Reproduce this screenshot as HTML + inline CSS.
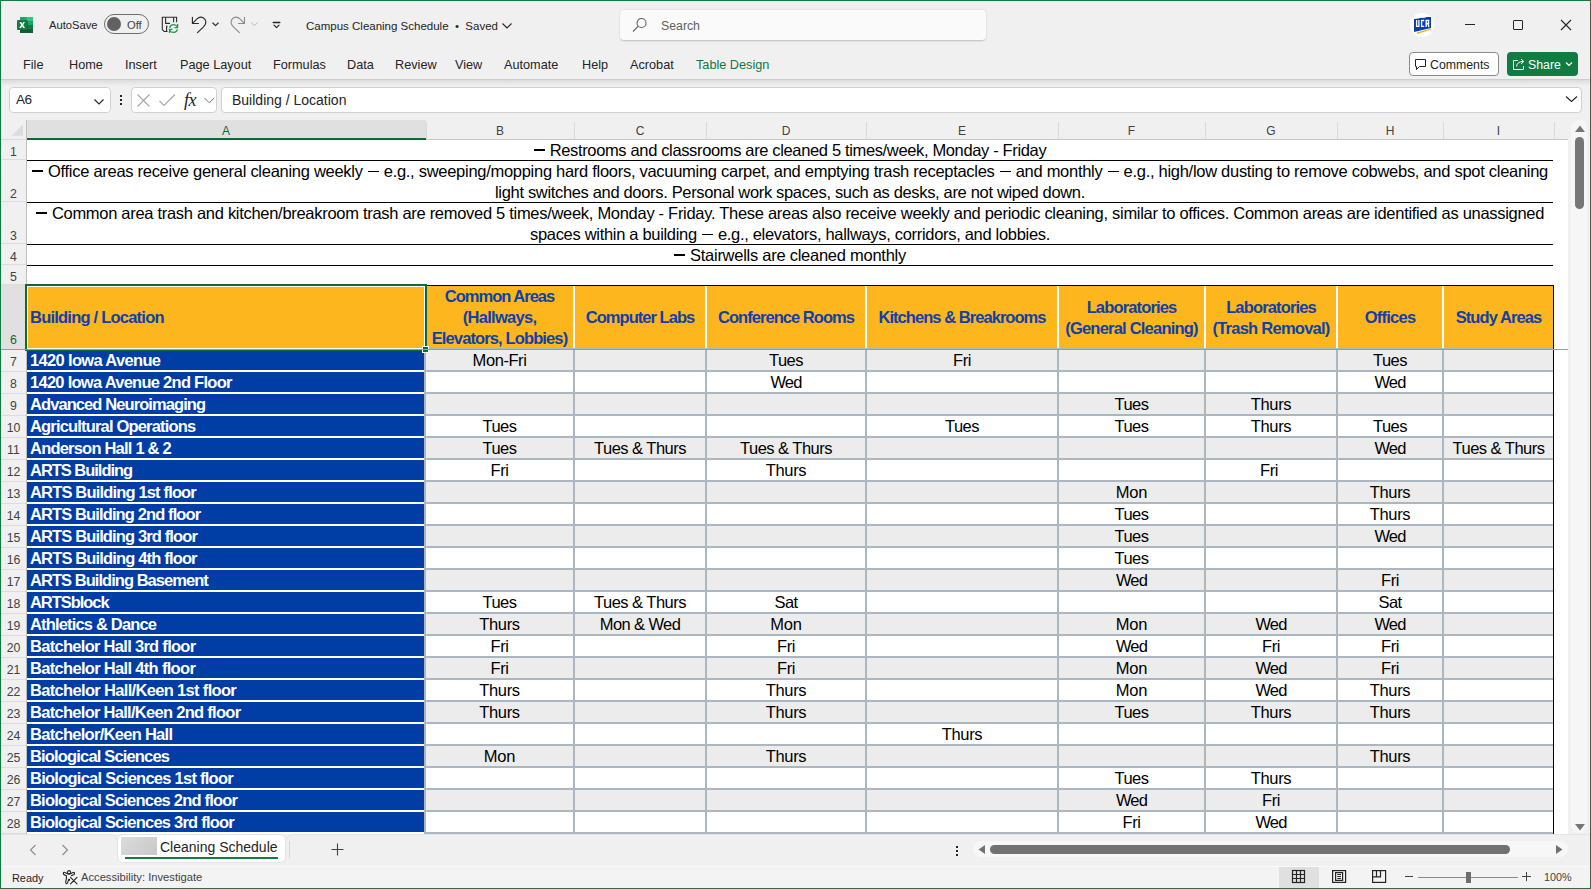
<!DOCTYPE html>
<html><head><meta charset="utf-8">
<style>
*{box-sizing:border-box;margin:0;padding:0}
html,body{width:1591px;height:889px;overflow:hidden;background:#f0f0f0;font-family:"Liberation Sans",sans-serif;color:#242424}
.a{position:absolute}
.t{position:absolute;white-space:nowrap;line-height:1}
#win{position:absolute;left:0;top:0;width:1591px;height:889px;border:1px solid #107c41;pointer-events:none;z-index:50}
.tab{font-size:12.7px;color:#242424;top:59px}
.cell{position:absolute;font-size:15.5px;white-space:nowrap;line-height:1}
</style></head><body>
<div id="win"></div>

<!-- ===== Title bar ===== -->
<svg class="a" style="left:13px;top:13px" width="24" height="24" viewBox="0 0 24 24">
  <rect x="7" y="4" width="13" height="16" rx="0.8" fill="#21a366"/>
  <rect x="13.5" y="4" width="6.5" height="4" fill="#33c481"/>
  <rect x="7" y="12" width="13" height="4" fill="#107c41"/>
  <rect x="7" y="16" width="13" height="4" fill="#185c37"/>
  <rect x="7.5" y="8" width="7.5" height="10" fill="#0a4a26" opacity="0.55"/>
  <rect x="4" y="7" width="10.5" height="10" rx="0.8" fill="#107c41"/>
  <path d="M6.3 9 H8.2 L9.2 10.9 L10.2 9 H12 L10.2 12 L12 15 H10.1 L9.1 13.1 L8.1 15 H6.2 L8.1 12 Z" fill="#fff"/>
</svg>
<div class="t" style="left:49px;top:20px;font-size:11.2px;color:#242424">AutoSave</div>
<div class="a" style="left:104px;top:14px;width:45px;height:20px;border:1px solid #6e6e6e;border-radius:10px;background:transparent"></div>
<div class="a" style="left:107px;top:17px;width:14px;height:14px;border-radius:50%;background:#616161"></div>
<div class="t" style="left:127px;top:20px;font-size:11.2px;color:#424242">Off</div>

<!-- save icon -->
<svg class="a" style="left:158px;top:13px" width="24" height="24" viewBox="0 0 24 24" fill="none" stroke="#2b2b2b" stroke-width="1.1">
  <path d="M9.5 18.5 H6.2 L4.3 16.6 V4.3 H18.6 V9.3"/>
  <path d="M7.6 4.3 V10.4 H12"/><path d="M15.6 4.3 V9.3"/>
  <path d="M9.6 13.3 H8.6 V18.5"/>
  <g stroke="#1f9a48" stroke-width="1.3"><path d="M11.6 14.8 C12.5 11 17.5 10.5 19.4 13.8"/><path d="M19.6 11 V14.7 H16.5"/>
  <path d="M19.4 16.3 C18.5 20 13.5 20.5 11.6 17.2"/><path d="M11.5 19.9 V16.3 H14.5"/></g>
</svg>
<!-- undo -->
<svg class="a" style="left:186px;top:13px" width="36" height="24" viewBox="0 0 36 24" fill="none" stroke="#2b2b2b" stroke-width="1.15" stroke-linecap="round" stroke-linejoin="round">
  <path d="M6.4 4.3 V10.5 H12.5"/>
  <path d="M7 9.8 L11 5.8 C13.5 3.3 17.5 3.6 19.2 6.8 C20.3 9 19.6 11.8 17.5 13.8 L11.5 19.6"/>
  <path d="M26.8 10 L29.5 12.7 L32.2 10"/>
</svg>
<!-- redo -->
<svg class="a" style="left:226px;top:13px" width="60" height="24" viewBox="0 0 60 24" fill="none" stroke-linecap="round" stroke-linejoin="round">
  <g stroke="#8a8a8a" stroke-width="1.1">
  <path d="M18.5 4.3 V10.5 H12.4"/>
  <path d="M17.9 9.8 L13.9 5.8 C11.4 3.3 7.4 3.6 5.7 6.8 C4.6 9 5.3 11.8 7.4 13.8 L13.4 19.6"/></g>
  <path d="M25.8 10 L28.5 12.6 L31.2 10" stroke="#b4b4b4" stroke-width="1"/>
  <path d="M47.3 9.5 H53.8" stroke="#242424" stroke-width="1.4"/>
  <path d="M48 12.2 L50.5 14.7 L53 12.2" stroke="#242424" stroke-width="1.2"/>
</svg>
<div class="t" style="left:306px;top:21px;font-size:11.5px;color:#242424">Campus Cleaning Schedule &nbsp;•&nbsp; Saved</div>
<svg class="a" style="left:501px;top:22px" width="12" height="8" viewBox="0 0 12 8" fill="none" stroke="#242424" stroke-width="1.1"><path d="M1.5 1.5 L6 6 L10.5 1.5"/></svg>

<!-- search -->
<div class="a" style="left:619px;top:9px;width:368px;height:32px;background:#fafafa;border:1px solid #e3e3e3;border-bottom-color:#c9c9c9;border-radius:5px;box-shadow:0 1px 1px rgba(0,0,0,0.06)"></div>
<svg class="a" style="left:631px;top:16px" width="18" height="18" viewBox="0 0 18 18" fill="none" stroke="#616161" stroke-width="1.1"><circle cx="10.5" cy="7" r="4.5"/><path d="M7.3 10.2 L2 15.5"/></svg>
<div class="t" style="left:661px;top:20px;font-size:12.3px;color:#616161">Search</div>

<!-- UCR avatar -->
<div class="a" style="left:1410px;top:13px;width:24px;height:24px;border-radius:50%;background:#fff"></div>
<svg class="a" style="left:1406px;top:9px" width="32" height="32" viewBox="0 0 32 32">
  <path d="M8 10 L13 9.6 L13.5 9 L19.5 8.8 L20 8 L25 8 L25 19 L8 23 Z" fill="#0b3ea8"/>
  <path d="M11 23.6 L25 19.4 L25 20.6 L11.2 25 Z" fill="#f5a800"/>
  <g fill="none" stroke="#fff" stroke-width="1.3">
    <path d="M10.6 11 V17.4 H12.9 V11"/>
    <path d="M18.2 11.5 H15.6 V17.4 H18.2"/>
    <path d="M20.2 18 V11.5 H22.6 V14.5 H20.6 M21.8 14.5 L23 18"/>
  </g>
</svg>
<!-- window controls -->
<div class="a" style="left:1465px;top:24px;width:10px;height:1px;background:#242424"></div>
<div class="a" style="left:1513px;top:20px;width:10px;height:10px;border:1px solid #242424;border-radius:1px"></div>
<svg class="a" style="left:1560px;top:19px" width="12" height="12" viewBox="0 0 12 12" stroke="#242424" stroke-width="1.1"><path d="M1 1 L11 11 M11 1 L1 11"/></svg>

<!-- ===== Ribbon tabs ===== -->
<div class="t tab" style="left:23px">File</div>
<div class="t tab" style="left:69px">Home</div>
<div class="t tab" style="left:125px">Insert</div>
<div class="t tab" style="left:180px">Page Layout</div>
<div class="t tab" style="left:273px">Formulas</div>
<div class="t tab" style="left:347px">Data</div>
<div class="t tab" style="left:395px">Review</div>
<div class="t tab" style="left:455px">View</div>
<div class="t tab" style="left:504px">Automate</div>
<div class="t tab" style="left:582px">Help</div>
<div class="t tab" style="left:630px">Acrobat</div>
<div class="t tab" style="left:696px;color:#0e7a3d">Table Design</div>

<!-- Comments / Share -->
<div class="a" style="left:1409px;top:52px;width:90px;height:24px;border:1px solid #8a8a8a;border-radius:4px;background:#fff"></div>
<svg class="a" style="left:1414px;top:58px" width="13" height="13" viewBox="0 0 13 13" fill="none" stroke="#242424" stroke-width="1"><path d="M1.5 1.5 H11.5 V8.5 H5.5 L2.5 11.5 V8.5 H1.5 Z"/></svg>
<div class="t" style="left:1430px;top:59px;font-size:12.3px;color:#242424">Comments</div>
<div class="a" style="left:1507px;top:52px;width:71px;height:24px;border-radius:4px;background:#107c41"></div>
<svg class="a" style="left:1511px;top:56px" width="16" height="16" viewBox="0 0 16 16" fill="none" stroke="#fff" stroke-width="1"><path d="M7 4.5 H2.5 V13.5 H12.5 V10"/><path d="M5.5 10.5 C6 7 8.5 5.5 12 5.5 M10 3 L12.8 5.5 L10 8"/></svg>
<div class="t" style="left:1528px;top:59px;font-size:12.3px;color:#fff">Share</div>
<svg class="a" style="left:1565px;top:61px" width="8" height="6" viewBox="0 0 8 6" fill="none" stroke="#fff" stroke-width="1.2"><path d="M1 1.5 L4 4.5 L7 1.5"/></svg>

<!-- ribbon bottom shadow -->
<div class="a" style="left:1px;top:79px;width:1589px;height:1px;background:#cdcdcd"></div>
<div class="a" style="left:1px;top:80px;width:1589px;height:6px;background:linear-gradient(#dcdcdc,#f0f0f0)"></div>

<!-- ===== Formula bar ===== -->
<div class="a" style="left:9px;top:87px;width:102px;height:26px;background:#fff;border:1px solid #d1d1d1;border-radius:4px"></div>
<div class="t" style="left:16px;top:93px;font-size:13.5px;color:#242424;letter-spacing:-0.6px">A6</div>
<svg class="a" style="left:93px;top:98px" width="12" height="8" viewBox="0 0 12 8" fill="none" stroke="#242424" stroke-width="1.1"><path d="M1.5 1.5 L6 6 L10.5 1.5"/></svg>
<div class="a" style="left:120px;top:95px;width:2px;height:2px;background:#242424"></div>
<div class="a" style="left:120px;top:99px;width:2px;height:2px;background:#242424"></div>
<div class="a" style="left:120px;top:103px;width:2px;height:2px;background:#242424"></div>
<div class="a" style="left:131px;top:87px;width:86px;height:26px;background:#fff;border:1px solid #d1d1d1;border-radius:4px"></div>
<svg class="a" style="left:137px;top:94px" width="13" height="13" viewBox="0 0 13 13" stroke="#a6a6a6" stroke-width="1.1"><path d="M0.5 0.5 L12.5 12.5 M12.5 0.5 L0.5 12.5"/></svg>
<svg class="a" style="left:159px;top:94px" width="17" height="13" viewBox="0 0 17 13" fill="none" stroke="#a6a6a6" stroke-width="1.1"><path d="M0.5 7 L5 11.5 L16 0.5"/></svg>
<div class="t" style="left:184px;top:91px;font-size:18px;font-family:'Liberation Serif',serif;font-style:italic;color:#242424;letter-spacing:-0.5px">fx</div>
<svg class="a" style="left:204px;top:97px" width="11" height="7" viewBox="0 0 11 7" fill="none" stroke="#6e6e6e" stroke-width="1"><path d="M0.5 1 L5.3 5.8 L10.2 1"/></svg>
<div class="a" style="left:221px;top:87px;width:1361px;height:26px;background:#fff;border:1px solid #d1d1d1;border-radius:4px"></div>
<div class="t" style="left:232px;top:93px;font-size:14px;color:#242424">Building / Location</div>
<svg class="a" style="left:1565px;top:95px" width="13" height="8" viewBox="0 0 13 8" fill="none" stroke="#242424" stroke-width="1.1"><path d="M1 1.5 L6.5 6.5 L12 1.5"/></svg>

<div id="grid">
<div class="a" style="left:1px;top:120px;width:1567px;height:19px;background:#f0f0f0"></div>
<div class="a" style="left:26px;top:120px;width:400px;height:18px;background:#e0e0e0"></div>
<div class="a" style="left:1px;top:139px;width:25px;height:1px;background:#dadada"></div>
<div class="a" style="left:26px;top:139px;width:1542px;height:1px;background:#c6c6c6"></div>
<div class="a" style="left:26px;top:138px;width:400px;height:2px;background:#0b6a35"></div>
<div class="a" style="left:26px;top:120px;width:1px;height:714px;background:#c0c0c0"></div>
<svg class="a" style="left:11px;top:124px" width="13" height="13" viewBox="0 0 13 13"><path d="M0.5 11.8 L12 0.5 L12 11.8 Z" fill="#dcdcdc"/></svg>
<div class="t" style="left:26px;width:400px;top:125px;font-size:12px;text-align:center;color:#0b6a35">A</div>
<div class="a" style="left:426px;top:122px;width:1px;height:17px;background:#dadada"></div>
<div class="t" style="left:426px;width:148px;top:125px;font-size:12px;text-align:center;color:#424242">B</div>
<div class="a" style="left:574px;top:122px;width:1px;height:17px;background:#dadada"></div>
<div class="t" style="left:574px;width:132px;top:125px;font-size:12px;text-align:center;color:#424242">C</div>
<div class="a" style="left:706px;top:122px;width:1px;height:17px;background:#dadada"></div>
<div class="t" style="left:706px;width:160px;top:125px;font-size:12px;text-align:center;color:#424242">D</div>
<div class="a" style="left:866px;top:122px;width:1px;height:17px;background:#dadada"></div>
<div class="t" style="left:866px;width:192px;top:125px;font-size:12px;text-align:center;color:#424242">E</div>
<div class="a" style="left:1058px;top:122px;width:1px;height:17px;background:#dadada"></div>
<div class="t" style="left:1058px;width:147px;top:125px;font-size:12px;text-align:center;color:#424242">F</div>
<div class="a" style="left:1205px;top:122px;width:1px;height:17px;background:#dadada"></div>
<div class="t" style="left:1205px;width:132px;top:125px;font-size:12px;text-align:center;color:#424242">G</div>
<div class="a" style="left:1337px;top:122px;width:1px;height:17px;background:#dadada"></div>
<div class="t" style="left:1337px;width:106px;top:125px;font-size:12px;text-align:center;color:#424242">H</div>
<div class="a" style="left:1443px;top:122px;width:1px;height:17px;background:#dadada"></div>
<div class="t" style="left:1443px;width:111px;top:125px;font-size:12px;text-align:center;color:#424242">I</div>
<div class="a" style="left:1554px;top:122px;width:1px;height:17px;background:#dadada"></div>
<div class="a" style="left:27px;top:140px;width:1541px;height:694px;background:#fff"></div>
<div class="a" style="left:1px;top:140px;width:25px;height:694px;background:#f0f0f0"></div>
<div class="a" style="left:1px;top:159px;width:25px;height:1px;background:#dcdcdc"></div>
<div class="t" style="left:1px;width:25px;top:146px;font-size:12.3px;text-align:center;color:#424242">1</div>
<div class="a" style="left:1px;top:201px;width:25px;height:1px;background:#dcdcdc"></div>
<div class="t" style="left:1px;width:25px;top:188px;font-size:12.3px;text-align:center;color:#424242">2</div>
<div class="a" style="left:1px;top:243px;width:25px;height:1px;background:#dcdcdc"></div>
<div class="t" style="left:1px;width:25px;top:230px;font-size:12.3px;text-align:center;color:#424242">3</div>
<div class="a" style="left:1px;top:264px;width:25px;height:1px;background:#dcdcdc"></div>
<div class="t" style="left:1px;width:25px;top:251px;font-size:12.3px;text-align:center;color:#424242">4</div>
<div class="a" style="left:1px;top:284px;width:25px;height:1px;background:#dcdcdc"></div>
<div class="t" style="left:1px;width:25px;top:271px;font-size:12.3px;text-align:center;color:#424242">5</div>
<div class="a" style="left:1px;top:285px;width:25px;height:65px;background:#e0e0e0"></div>
<div class="a" style="left:1px;top:349px;width:25px;height:1px;background:#dcdcdc"></div>
<div class="t" style="left:1px;width:25px;top:334px;font-size:12.3px;text-align:center;color:#0b6a35">6</div>
<div class="a" style="left:1px;top:371px;width:25px;height:1px;background:#dcdcdc"></div>
<div class="t" style="left:1px;width:25px;top:356px;font-size:12.3px;text-align:center;color:#424242">7</div>
<div class="a" style="left:1px;top:393px;width:25px;height:1px;background:#dcdcdc"></div>
<div class="t" style="left:1px;width:25px;top:378px;font-size:12.3px;text-align:center;color:#424242">8</div>
<div class="a" style="left:1px;top:415px;width:25px;height:1px;background:#dcdcdc"></div>
<div class="t" style="left:1px;width:25px;top:400px;font-size:12.3px;text-align:center;color:#424242">9</div>
<div class="a" style="left:1px;top:437px;width:25px;height:1px;background:#dcdcdc"></div>
<div class="t" style="left:1px;width:25px;top:422px;font-size:12.3px;text-align:center;color:#424242">10</div>
<div class="a" style="left:1px;top:459px;width:25px;height:1px;background:#dcdcdc"></div>
<div class="t" style="left:1px;width:25px;top:444px;font-size:12.3px;text-align:center;color:#424242">11</div>
<div class="a" style="left:1px;top:481px;width:25px;height:1px;background:#dcdcdc"></div>
<div class="t" style="left:1px;width:25px;top:466px;font-size:12.3px;text-align:center;color:#424242">12</div>
<div class="a" style="left:1px;top:503px;width:25px;height:1px;background:#dcdcdc"></div>
<div class="t" style="left:1px;width:25px;top:488px;font-size:12.3px;text-align:center;color:#424242">13</div>
<div class="a" style="left:1px;top:525px;width:25px;height:1px;background:#dcdcdc"></div>
<div class="t" style="left:1px;width:25px;top:510px;font-size:12.3px;text-align:center;color:#424242">14</div>
<div class="a" style="left:1px;top:547px;width:25px;height:1px;background:#dcdcdc"></div>
<div class="t" style="left:1px;width:25px;top:532px;font-size:12.3px;text-align:center;color:#424242">15</div>
<div class="a" style="left:1px;top:569px;width:25px;height:1px;background:#dcdcdc"></div>
<div class="t" style="left:1px;width:25px;top:554px;font-size:12.3px;text-align:center;color:#424242">16</div>
<div class="a" style="left:1px;top:591px;width:25px;height:1px;background:#dcdcdc"></div>
<div class="t" style="left:1px;width:25px;top:576px;font-size:12.3px;text-align:center;color:#424242">17</div>
<div class="a" style="left:1px;top:613px;width:25px;height:1px;background:#dcdcdc"></div>
<div class="t" style="left:1px;width:25px;top:598px;font-size:12.3px;text-align:center;color:#424242">18</div>
<div class="a" style="left:1px;top:635px;width:25px;height:1px;background:#dcdcdc"></div>
<div class="t" style="left:1px;width:25px;top:620px;font-size:12.3px;text-align:center;color:#424242">19</div>
<div class="a" style="left:1px;top:657px;width:25px;height:1px;background:#dcdcdc"></div>
<div class="t" style="left:1px;width:25px;top:642px;font-size:12.3px;text-align:center;color:#424242">20</div>
<div class="a" style="left:1px;top:679px;width:25px;height:1px;background:#dcdcdc"></div>
<div class="t" style="left:1px;width:25px;top:664px;font-size:12.3px;text-align:center;color:#424242">21</div>
<div class="a" style="left:1px;top:701px;width:25px;height:1px;background:#dcdcdc"></div>
<div class="t" style="left:1px;width:25px;top:686px;font-size:12.3px;text-align:center;color:#424242">22</div>
<div class="a" style="left:1px;top:723px;width:25px;height:1px;background:#dcdcdc"></div>
<div class="t" style="left:1px;width:25px;top:708px;font-size:12.3px;text-align:center;color:#424242">23</div>
<div class="a" style="left:1px;top:745px;width:25px;height:1px;background:#dcdcdc"></div>
<div class="t" style="left:1px;width:25px;top:730px;font-size:12.3px;text-align:center;color:#424242">24</div>
<div class="a" style="left:1px;top:767px;width:25px;height:1px;background:#dcdcdc"></div>
<div class="t" style="left:1px;width:25px;top:752px;font-size:12.3px;text-align:center;color:#424242">25</div>
<div class="a" style="left:1px;top:789px;width:25px;height:1px;background:#dcdcdc"></div>
<div class="t" style="left:1px;width:25px;top:774px;font-size:12.3px;text-align:center;color:#424242">26</div>
<div class="a" style="left:1px;top:811px;width:25px;height:1px;background:#dcdcdc"></div>
<div class="t" style="left:1px;width:25px;top:796px;font-size:12.3px;text-align:center;color:#424242">27</div>
<div class="a" style="left:1px;top:833px;width:25px;height:1px;background:#dcdcdc"></div>
<div class="t" style="left:1px;width:25px;top:818px;font-size:12.3px;text-align:center;color:#424242">28</div>
<div class="a" style="left:27px;top:160px;width:1526px;height:1px;background:#000"></div>
<div class="a" style="left:27px;top:202px;width:1526px;height:1px;background:#000"></div>
<div class="a" style="left:27px;top:244px;width:1526px;height:1px;background:#000"></div>
<div class="a" style="left:27px;top:265px;width:1526px;height:1px;background:#000"></div>
<div class="t" style="left:27px;width:1526px;top:142px;font-size:16.5px;text-align:center;color:#000"><span style="display:inline-block"><span style="display:inline-block;width:11px;height:2px;background:#000;vertical-align:middle;margin-right:5px;position:relative;top:-2px"></span><span style="letter-spacing:-0.354px">Restrooms and classrooms are cleaned 5 times/week, Monday - Friday</span></span></div>
<div class="t" style="left:27px;width:1526px;top:163px;font-size:16.5px;text-align:center;color:#000"><span style="display:inline-block"><span style="display:inline-block;width:11px;height:2px;background:#000;vertical-align:middle;margin-right:5px;position:relative;top:-2px"></span><span style="letter-spacing:-0.284px">Office areas receive general cleaning weekly <span style="display:inline-block;width:11px;height:1.1px;background:#000;margin:0 0.75px;vertical-align:middle;position:relative;top:-1px;letter-spacing:0"></span> e.g., sweeping/mopping hard floors, vacuuming carpet, and emptying trash receptacles <span style="display:inline-block;width:11px;height:1.1px;background:#000;margin:0 0.75px;vertical-align:middle;position:relative;top:-1px;letter-spacing:0"></span> and monthly <span style="display:inline-block;width:11px;height:1.1px;background:#000;margin:0 0.75px;vertical-align:middle;position:relative;top:-1px;letter-spacing:0"></span> e.g., high/low dusting to remove cobwebs, and spot cleaning</span></span></div>
<div class="t" style="left:27px;width:1526px;top:184px;font-size:16.5px;text-align:center;color:#000"><span style="display:inline-block"><span style="letter-spacing:-0.333px">light switches and doors. Personal work spaces, such as desks, are not wiped down.</span></span></div>
<div class="t" style="left:27px;width:1526px;top:205px;font-size:16.5px;text-align:center;color:#000"><span style="display:inline-block"><span style="display:inline-block;width:11px;height:2px;background:#000;vertical-align:middle;margin-right:5px;position:relative;top:-2px"></span><span style="letter-spacing:-0.295px">Common area trash and kitchen/breakroom trash are removed 5 times/week, Monday - Friday. These areas also receive weekly and periodic cleaning, similar to offices. Common areas are identified as unassigned</span></span></div>
<div class="t" style="left:27px;width:1526px;top:226px;font-size:16.5px;text-align:center;color:#000"><span style="display:inline-block"><span style="letter-spacing:-0.309px">spaces within a building <span style="display:inline-block;width:11px;height:1.1px;background:#000;margin:0 0.75px;vertical-align:middle;position:relative;top:-1px;letter-spacing:0"></span> e.g., elevators, hallways, corridors, and lobbies.</span></span></div>
<div class="t" style="left:27px;width:1526px;top:247px;font-size:16.5px;text-align:center;color:#000"><span style="display:inline-block"><span style="display:inline-block;width:11px;height:2px;background:#000;vertical-align:middle;margin-right:5px;position:relative;top:-2px"></span><span style="letter-spacing:-0.259px">Stairwells are cleaned monthly</span></span></div>
<div class="a" style="left:27px;top:285px;width:1526px;height:1px;background:#000"></div>
<div class="a" style="left:27px;top:286px;width:1526px;height:62px;background:#fdb61e"></div>
<div class="a" style="left:424px;top:286px;width:2px;height:62px;background:#fff"></div>
<div class="a" style="left:573px;top:286px;width:2px;height:62px;background:#fff"></div>
<div class="a" style="left:705px;top:286px;width:2px;height:62px;background:#fff"></div>
<div class="a" style="left:865px;top:286px;width:2px;height:62px;background:#fff"></div>
<div class="a" style="left:1057px;top:286px;width:2px;height:62px;background:#fff"></div>
<div class="a" style="left:1204px;top:286px;width:2px;height:62px;background:#fff"></div>
<div class="a" style="left:1336px;top:286px;width:2px;height:62px;background:#fff"></div>
<div class="a" style="left:1442px;top:286px;width:2px;height:62px;background:#fff"></div>
<div class="a" style="left:27px;top:348px;width:1526px;height:2px;background:#abb6be"></div>
<div class="a" style="left:1553px;top:285px;width:1px;height:549px;background:#000"></div>
<div class="t" style="left:30px;top:308.5px;font-size:16.5px;font-weight:bold;color:#1041a8"><span style="letter-spacing:-0.775px">Building / Location</span></div>
<div class="t" style="left:426px;width:147px;top:287.5px;font-size:16.5px;font-weight:bold;text-align:center;color:#1041a8"><span style="letter-spacing:-0.998px">Common Areas</span></div>
<div class="t" style="left:426px;width:147px;top:308.5px;font-size:16.5px;font-weight:bold;text-align:center;color:#1041a8"><span style="letter-spacing:-0.712px">(Hallways,</span></div>
<div class="t" style="left:426px;width:147px;top:329.5px;font-size:16.5px;font-weight:bold;text-align:center;color:#1041a8"><span style="letter-spacing:-0.875px">Elevators, Lobbies)</span></div>
<div class="t" style="left:575px;width:130px;top:308.5px;font-size:16.5px;font-weight:bold;text-align:center;color:#1041a8"><span style="letter-spacing:-0.958px">Computer Labs</span></div>
<div class="t" style="left:707px;width:158px;top:308.5px;font-size:16.5px;font-weight:bold;text-align:center;color:#1041a8"><span style="letter-spacing:-0.959px">Conference Rooms</span></div>
<div class="t" style="left:867px;width:190px;top:308.5px;font-size:16.5px;font-weight:bold;text-align:center;color:#1041a8"><span style="letter-spacing:-0.947px">Kitchens &amp; Breakrooms</span></div>
<div class="t" style="left:1059px;width:145px;top:298.5px;font-size:16.5px;font-weight:bold;text-align:center;color:#1041a8"><span style="letter-spacing:-0.854px">Laboratories</span></div>
<div class="t" style="left:1059px;width:145px;top:319.5px;font-size:16.5px;font-weight:bold;text-align:center;color:#1041a8"><span style="letter-spacing:-0.782px">(General Cleaning)</span></div>
<div class="t" style="left:1206px;width:130px;top:298.5px;font-size:16.5px;font-weight:bold;text-align:center;color:#1041a8"><span style="letter-spacing:-0.854px">Laboratories</span></div>
<div class="t" style="left:1206px;width:130px;top:319.5px;font-size:16.5px;font-weight:bold;text-align:center;color:#1041a8"><span style="letter-spacing:-0.747px">(Trash Removal)</span></div>
<div class="t" style="left:1338px;width:104px;top:308.5px;font-size:16.5px;font-weight:bold;text-align:center;color:#1041a8"><span style="letter-spacing:-0.764px">Offices</span></div>
<div class="t" style="left:1444px;width:109px;top:308.5px;font-size:16.5px;font-weight:bold;text-align:center;color:#1041a8"><span style="letter-spacing:-0.910px">Study Areas</span></div>
<div class="a" style="left:426px;top:350px;width:1127px;height:20px;background:#ececec"></div>
<div class="a" style="left:27px;top:350px;width:397px;height:20px;background:#003da5"></div>
<div class="a" style="left:27px;top:372px;width:397px;height:20px;background:#003da5"></div>
<div class="a" style="left:426px;top:394px;width:1127px;height:20px;background:#ececec"></div>
<div class="a" style="left:27px;top:394px;width:397px;height:20px;background:#003da5"></div>
<div class="a" style="left:27px;top:416px;width:397px;height:20px;background:#003da5"></div>
<div class="a" style="left:426px;top:438px;width:1127px;height:20px;background:#ececec"></div>
<div class="a" style="left:27px;top:438px;width:397px;height:20px;background:#003da5"></div>
<div class="a" style="left:27px;top:460px;width:397px;height:20px;background:#003da5"></div>
<div class="a" style="left:426px;top:482px;width:1127px;height:20px;background:#ececec"></div>
<div class="a" style="left:27px;top:482px;width:397px;height:20px;background:#003da5"></div>
<div class="a" style="left:27px;top:504px;width:397px;height:20px;background:#003da5"></div>
<div class="a" style="left:426px;top:526px;width:1127px;height:20px;background:#ececec"></div>
<div class="a" style="left:27px;top:526px;width:397px;height:20px;background:#003da5"></div>
<div class="a" style="left:27px;top:548px;width:397px;height:20px;background:#003da5"></div>
<div class="a" style="left:426px;top:570px;width:1127px;height:20px;background:#ececec"></div>
<div class="a" style="left:27px;top:570px;width:397px;height:20px;background:#003da5"></div>
<div class="a" style="left:27px;top:592px;width:397px;height:20px;background:#003da5"></div>
<div class="a" style="left:426px;top:614px;width:1127px;height:20px;background:#ececec"></div>
<div class="a" style="left:27px;top:614px;width:397px;height:20px;background:#003da5"></div>
<div class="a" style="left:27px;top:636px;width:397px;height:20px;background:#003da5"></div>
<div class="a" style="left:426px;top:658px;width:1127px;height:20px;background:#ececec"></div>
<div class="a" style="left:27px;top:658px;width:397px;height:20px;background:#003da5"></div>
<div class="a" style="left:27px;top:680px;width:397px;height:20px;background:#003da5"></div>
<div class="a" style="left:426px;top:702px;width:1127px;height:20px;background:#ececec"></div>
<div class="a" style="left:27px;top:702px;width:397px;height:20px;background:#003da5"></div>
<div class="a" style="left:27px;top:724px;width:397px;height:20px;background:#003da5"></div>
<div class="a" style="left:426px;top:746px;width:1127px;height:20px;background:#ececec"></div>
<div class="a" style="left:27px;top:746px;width:397px;height:20px;background:#003da5"></div>
<div class="a" style="left:27px;top:768px;width:397px;height:20px;background:#003da5"></div>
<div class="a" style="left:426px;top:790px;width:1127px;height:20px;background:#ececec"></div>
<div class="a" style="left:27px;top:790px;width:397px;height:20px;background:#003da5"></div>
<div class="a" style="left:27px;top:812px;width:397px;height:20px;background:#003da5"></div>
<div class="a" style="left:426px;top:370px;width:1127px;height:2px;background:#abb6be"></div>
<div class="a" style="left:426px;top:392px;width:1127px;height:2px;background:#abb6be"></div>
<div class="a" style="left:426px;top:414px;width:1127px;height:2px;background:#abb6be"></div>
<div class="a" style="left:426px;top:436px;width:1127px;height:2px;background:#abb6be"></div>
<div class="a" style="left:426px;top:458px;width:1127px;height:2px;background:#abb6be"></div>
<div class="a" style="left:426px;top:480px;width:1127px;height:2px;background:#abb6be"></div>
<div class="a" style="left:426px;top:502px;width:1127px;height:2px;background:#abb6be"></div>
<div class="a" style="left:426px;top:524px;width:1127px;height:2px;background:#abb6be"></div>
<div class="a" style="left:426px;top:546px;width:1127px;height:2px;background:#abb6be"></div>
<div class="a" style="left:426px;top:568px;width:1127px;height:2px;background:#abb6be"></div>
<div class="a" style="left:426px;top:590px;width:1127px;height:2px;background:#abb6be"></div>
<div class="a" style="left:426px;top:612px;width:1127px;height:2px;background:#abb6be"></div>
<div class="a" style="left:426px;top:634px;width:1127px;height:2px;background:#abb6be"></div>
<div class="a" style="left:426px;top:656px;width:1127px;height:2px;background:#abb6be"></div>
<div class="a" style="left:426px;top:678px;width:1127px;height:2px;background:#abb6be"></div>
<div class="a" style="left:426px;top:700px;width:1127px;height:2px;background:#abb6be"></div>
<div class="a" style="left:426px;top:722px;width:1127px;height:2px;background:#abb6be"></div>
<div class="a" style="left:426px;top:744px;width:1127px;height:2px;background:#abb6be"></div>
<div class="a" style="left:426px;top:766px;width:1127px;height:2px;background:#abb6be"></div>
<div class="a" style="left:426px;top:788px;width:1127px;height:2px;background:#abb6be"></div>
<div class="a" style="left:426px;top:810px;width:1127px;height:2px;background:#abb6be"></div>
<div class="a" style="left:426px;top:832px;width:1127px;height:2px;background:#abb6be"></div>
<div class="a" style="left:573px;top:350px;width:2px;height:484px;background:#abb6be"></div>
<div class="a" style="left:705px;top:350px;width:2px;height:484px;background:#abb6be"></div>
<div class="a" style="left:865px;top:350px;width:2px;height:484px;background:#abb6be"></div>
<div class="a" style="left:1057px;top:350px;width:2px;height:484px;background:#abb6be"></div>
<div class="a" style="left:1204px;top:350px;width:2px;height:484px;background:#abb6be"></div>
<div class="a" style="left:1336px;top:350px;width:2px;height:484px;background:#abb6be"></div>
<div class="a" style="left:1442px;top:350px;width:2px;height:484px;background:#abb6be"></div>
<div class="a" style="left:424px;top:348px;width:2px;height:486px;background:#abb6be"></div>
<div class="t" style="left:30px;top:352px;font-size:16.5px;font-weight:bold;color:#fff"><span style="letter-spacing:-0.662px">1420 Iowa Avenue</span></div>
<div class="t" style="left:426px;width:147px;top:352px;font-size:16.5px;text-align:center;color:#000;"><span style="letter-spacing:-0.439px">Mon-Fri</span></div>
<div class="t" style="left:707px;width:158px;top:352px;font-size:16.5px;text-align:center;color:#000;"><span style="letter-spacing:-0.512px">Tues</span></div>
<div class="t" style="left:867px;width:190px;top:352px;font-size:16.5px;text-align:center;color:#000;"><span style="letter-spacing:-0.489px">Fri</span></div>
<div class="t" style="left:1338px;width:104px;top:352px;font-size:16.5px;text-align:center;color:#000;"><span style="letter-spacing:-0.512px">Tues</span></div>
<div class="t" style="left:30px;top:374px;font-size:16.5px;font-weight:bold;color:#fff"><span style="letter-spacing:-0.731px">1420 Iowa Avenue 2nd Floor</span></div>
<div class="t" style="left:707px;width:158px;top:374px;font-size:16.5px;text-align:center;color:#000;"><span style="letter-spacing:-0.827px">Wed</span></div>
<div class="t" style="left:1338px;width:104px;top:374px;font-size:16.5px;text-align:center;color:#000;"><span style="letter-spacing:-0.827px">Wed</span></div>
<div class="t" style="left:30px;top:396px;font-size:16.5px;font-weight:bold;color:#fff"><span style="letter-spacing:-0.915px">Advanced Neuroimaging</span></div>
<div class="t" style="left:1059px;width:145px;top:396px;font-size:16.5px;text-align:center;color:#000;"><span style="letter-spacing:-0.512px">Tues</span></div>
<div class="t" style="left:1206px;width:130px;top:396px;font-size:16.5px;text-align:center;color:#000;"><span style="letter-spacing:-0.345px">Thurs</span></div>
<div class="t" style="left:30px;top:418px;font-size:16.5px;font-weight:bold;color:#fff"><span style="letter-spacing:-0.825px">Agricultural Operations</span></div>
<div class="t" style="left:426px;width:147px;top:418px;font-size:16.5px;text-align:center;color:#000;"><span style="letter-spacing:-0.512px">Tues</span></div>
<div class="t" style="left:867px;width:190px;top:418px;font-size:16.5px;text-align:center;color:#000;"><span style="letter-spacing:-0.512px">Tues</span></div>
<div class="t" style="left:1059px;width:145px;top:418px;font-size:16.5px;text-align:center;color:#000;"><span style="letter-spacing:-0.512px">Tues</span></div>
<div class="t" style="left:1206px;width:130px;top:418px;font-size:16.5px;text-align:center;color:#000;"><span style="letter-spacing:-0.345px">Thurs</span></div>
<div class="t" style="left:1338px;width:104px;top:418px;font-size:16.5px;text-align:center;color:#000;"><span style="letter-spacing:-0.512px">Tues</span></div>
<div class="t" style="left:30px;top:440px;font-size:16.5px;font-weight:bold;color:#fff"><span style="letter-spacing:-0.789px">Anderson Hall 1 &amp; 2</span></div>
<div class="t" style="left:426px;width:147px;top:440px;font-size:16.5px;text-align:center;color:#000;"><span style="letter-spacing:-0.512px">Tues</span></div>
<div class="t" style="left:575px;width:130px;top:440px;font-size:16.5px;text-align:center;color:#000;"><span style="letter-spacing:-0.519px">Tues &amp; Thurs</span></div>
<div class="t" style="left:707px;width:158px;top:440px;font-size:16.5px;text-align:center;color:#000;"><span style="letter-spacing:-0.519px">Tues &amp; Thurs</span></div>
<div class="t" style="left:1338px;width:104px;top:440px;font-size:16.5px;text-align:center;color:#000;"><span style="letter-spacing:-0.827px">Wed</span></div>
<div class="t" style="left:1444px;width:109px;top:440px;font-size:16.5px;text-align:center;color:#000;"><span style="letter-spacing:-0.519px">Tues &amp; Thurs</span></div>
<div class="t" style="left:30px;top:462px;font-size:16.5px;font-weight:bold;color:#fff"><span style="letter-spacing:-1.029px">ARTS Building</span></div>
<div class="t" style="left:426px;width:147px;top:462px;font-size:16.5px;text-align:center;color:#000;"><span style="letter-spacing:-0.489px">Fri</span></div>
<div class="t" style="left:707px;width:158px;top:462px;font-size:16.5px;text-align:center;color:#000;"><span style="letter-spacing:-0.345px">Thurs</span></div>
<div class="t" style="left:1206px;width:130px;top:462px;font-size:16.5px;text-align:center;color:#000;padding-right:4px;"><span style="letter-spacing:-0.489px">Fri</span></div>
<div class="t" style="left:30px;top:484px;font-size:16.5px;font-weight:bold;color:#fff"><span style="letter-spacing:-0.835px">ARTS Building 1st floor</span></div>
<div class="t" style="left:1059px;width:145px;top:484px;font-size:16.5px;text-align:center;color:#000;"><span style="letter-spacing:-0.162px">Mon</span></div>
<div class="t" style="left:1338px;width:104px;top:484px;font-size:16.5px;text-align:center;color:#000;"><span style="letter-spacing:-0.345px">Thurs</span></div>
<div class="t" style="left:30px;top:506px;font-size:16.5px;font-weight:bold;color:#fff"><span style="letter-spacing:-0.886px">ARTS Building 2nd floor</span></div>
<div class="t" style="left:1059px;width:145px;top:506px;font-size:16.5px;text-align:center;color:#000;"><span style="letter-spacing:-0.512px">Tues</span></div>
<div class="t" style="left:1338px;width:104px;top:506px;font-size:16.5px;text-align:center;color:#000;"><span style="letter-spacing:-0.345px">Thurs</span></div>
<div class="t" style="left:30px;top:528px;font-size:16.5px;font-weight:bold;color:#fff"><span style="letter-spacing:-0.867px">ARTS Building 3rd floor</span></div>
<div class="t" style="left:1059px;width:145px;top:528px;font-size:16.5px;text-align:center;color:#000;"><span style="letter-spacing:-0.512px">Tues</span></div>
<div class="t" style="left:1338px;width:104px;top:528px;font-size:16.5px;text-align:center;color:#000;"><span style="letter-spacing:-0.827px">Wed</span></div>
<div class="t" style="left:30px;top:550px;font-size:16.5px;font-weight:bold;color:#fff"><span style="letter-spacing:-0.842px">ARTS Building 4th floor</span></div>
<div class="t" style="left:1059px;width:145px;top:550px;font-size:16.5px;text-align:center;color:#000;"><span style="letter-spacing:-0.512px">Tues</span></div>
<div class="t" style="left:30px;top:572px;font-size:16.5px;font-weight:bold;color:#fff"><span style="letter-spacing:-0.959px">ARTS Building Basement</span></div>
<div class="t" style="left:1059px;width:145px;top:572px;font-size:16.5px;text-align:center;color:#000;"><span style="letter-spacing:-0.827px">Wed</span></div>
<div class="t" style="left:1338px;width:104px;top:572px;font-size:16.5px;text-align:center;color:#000;"><span style="letter-spacing:-0.489px">Fri</span></div>
<div class="t" style="left:30px;top:594px;font-size:16.5px;font-weight:bold;color:#fff"><span style="letter-spacing:-1.053px">ARTSblock</span></div>
<div class="t" style="left:426px;width:147px;top:594px;font-size:16.5px;text-align:center;color:#000;"><span style="letter-spacing:-0.512px">Tues</span></div>
<div class="t" style="left:575px;width:130px;top:594px;font-size:16.5px;text-align:center;color:#000;"><span style="letter-spacing:-0.519px">Tues &amp; Thurs</span></div>
<div class="t" style="left:707px;width:158px;top:594px;font-size:16.5px;text-align:center;color:#000;"><span style="letter-spacing:-0.521px">Sat</span></div>
<div class="t" style="left:1338px;width:104px;top:594px;font-size:16.5px;text-align:center;color:#000;"><span style="letter-spacing:-0.521px">Sat</span></div>
<div class="t" style="left:30px;top:616px;font-size:16.5px;font-weight:bold;color:#fff"><span style="letter-spacing:-0.830px">Athletics &amp; Dance</span></div>
<div class="t" style="left:426px;width:147px;top:616px;font-size:16.5px;text-align:center;color:#000;"><span style="letter-spacing:-0.345px">Thurs</span></div>
<div class="t" style="left:575px;width:130px;top:616px;font-size:16.5px;text-align:center;color:#000;"><span style="letter-spacing:-0.603px">Mon &amp; Wed</span></div>
<div class="t" style="left:707px;width:158px;top:616px;font-size:16.5px;text-align:center;color:#000;"><span style="letter-spacing:-0.162px">Mon</span></div>
<div class="t" style="left:1059px;width:145px;top:616px;font-size:16.5px;text-align:center;color:#000;"><span style="letter-spacing:-0.162px">Mon</span></div>
<div class="t" style="left:1206px;width:130px;top:616px;font-size:16.5px;text-align:center;color:#000;"><span style="letter-spacing:-0.827px">Wed</span></div>
<div class="t" style="left:1338px;width:104px;top:616px;font-size:16.5px;text-align:center;color:#000;"><span style="letter-spacing:-0.827px">Wed</span></div>
<div class="t" style="left:30px;top:638px;font-size:16.5px;font-weight:bold;color:#fff"><span style="letter-spacing:-0.708px">Batchelor Hall 3rd floor</span></div>
<div class="t" style="left:426px;width:147px;top:638px;font-size:16.5px;text-align:center;color:#000;"><span style="letter-spacing:-0.489px">Fri</span></div>
<div class="t" style="left:707px;width:158px;top:638px;font-size:16.5px;text-align:center;color:#000;"><span style="letter-spacing:-0.489px">Fri</span></div>
<div class="t" style="left:1059px;width:145px;top:638px;font-size:16.5px;text-align:center;color:#000;"><span style="letter-spacing:-0.827px">Wed</span></div>
<div class="t" style="left:1206px;width:130px;top:638px;font-size:16.5px;text-align:center;color:#000;"><span style="letter-spacing:-0.489px">Fri</span></div>
<div class="t" style="left:1338px;width:104px;top:638px;font-size:16.5px;text-align:center;color:#000;"><span style="letter-spacing:-0.489px">Fri</span></div>
<div class="t" style="left:30px;top:660px;font-size:16.5px;font-weight:bold;color:#fff"><span style="letter-spacing:-0.683px">Batchelor Hall 4th floor</span></div>
<div class="t" style="left:426px;width:147px;top:660px;font-size:16.5px;text-align:center;color:#000;"><span style="letter-spacing:-0.489px">Fri</span></div>
<div class="t" style="left:707px;width:158px;top:660px;font-size:16.5px;text-align:center;color:#000;"><span style="letter-spacing:-0.489px">Fri</span></div>
<div class="t" style="left:1059px;width:145px;top:660px;font-size:16.5px;text-align:center;color:#000;"><span style="letter-spacing:-0.162px">Mon</span></div>
<div class="t" style="left:1206px;width:130px;top:660px;font-size:16.5px;text-align:center;color:#000;"><span style="letter-spacing:-0.827px">Wed</span></div>
<div class="t" style="left:1338px;width:104px;top:660px;font-size:16.5px;text-align:center;color:#000;"><span style="letter-spacing:-0.489px">Fri</span></div>
<div class="t" style="left:30px;top:682px;font-size:16.5px;font-weight:bold;color:#fff"><span style="letter-spacing:-0.670px">Batchelor Hall/Keen 1st floor</span></div>
<div class="t" style="left:426px;width:147px;top:682px;font-size:16.5px;text-align:center;color:#000;"><span style="letter-spacing:-0.345px">Thurs</span></div>
<div class="t" style="left:707px;width:158px;top:682px;font-size:16.5px;text-align:center;color:#000;"><span style="letter-spacing:-0.345px">Thurs</span></div>
<div class="t" style="left:1059px;width:145px;top:682px;font-size:16.5px;text-align:center;color:#000;"><span style="letter-spacing:-0.162px">Mon</span></div>
<div class="t" style="left:1206px;width:130px;top:682px;font-size:16.5px;text-align:center;color:#000;"><span style="letter-spacing:-0.827px">Wed</span></div>
<div class="t" style="left:1338px;width:104px;top:682px;font-size:16.5px;text-align:center;color:#000;"><span style="letter-spacing:-0.345px">Thurs</span></div>
<div class="t" style="left:30px;top:704px;font-size:16.5px;font-weight:bold;color:#fff"><span style="letter-spacing:-0.711px">Batchelor Hall/Keen 2nd floor</span></div>
<div class="t" style="left:426px;width:147px;top:704px;font-size:16.5px;text-align:center;color:#000;"><span style="letter-spacing:-0.345px">Thurs</span></div>
<div class="t" style="left:707px;width:158px;top:704px;font-size:16.5px;text-align:center;color:#000;"><span style="letter-spacing:-0.345px">Thurs</span></div>
<div class="t" style="left:1059px;width:145px;top:704px;font-size:16.5px;text-align:center;color:#000;"><span style="letter-spacing:-0.512px">Tues</span></div>
<div class="t" style="left:1206px;width:130px;top:704px;font-size:16.5px;text-align:center;color:#000;"><span style="letter-spacing:-0.345px">Thurs</span></div>
<div class="t" style="left:1338px;width:104px;top:704px;font-size:16.5px;text-align:center;color:#000;"><span style="letter-spacing:-0.345px">Thurs</span></div>
<div class="t" style="left:30px;top:726px;font-size:16.5px;font-weight:bold;color:#fff"><span style="letter-spacing:-0.716px">Batchelor/Keen Hall</span></div>
<div class="t" style="left:867px;width:190px;top:726px;font-size:16.5px;text-align:center;color:#000;"><span style="letter-spacing:-0.345px">Thurs</span></div>
<div class="t" style="left:30px;top:748px;font-size:16.5px;font-weight:bold;color:#fff"><span style="letter-spacing:-0.838px">Biological Sciences</span></div>
<div class="t" style="left:426px;width:147px;top:748px;font-size:16.5px;text-align:center;color:#000;"><span style="letter-spacing:-0.162px">Mon</span></div>
<div class="t" style="left:707px;width:158px;top:748px;font-size:16.5px;text-align:center;color:#000;"><span style="letter-spacing:-0.345px">Thurs</span></div>
<div class="t" style="left:1338px;width:104px;top:748px;font-size:16.5px;text-align:center;color:#000;"><span style="letter-spacing:-0.345px">Thurs</span></div>
<div class="t" style="left:30px;top:770px;font-size:16.5px;font-weight:bold;color:#fff"><span style="letter-spacing:-0.750px">Biological Sciences 1st floor</span></div>
<div class="t" style="left:1059px;width:145px;top:770px;font-size:16.5px;text-align:center;color:#000;"><span style="letter-spacing:-0.512px">Tues</span></div>
<div class="t" style="left:1206px;width:130px;top:770px;font-size:16.5px;text-align:center;color:#000;"><span style="letter-spacing:-0.345px">Thurs</span></div>
<div class="t" style="left:30px;top:792px;font-size:16.5px;font-weight:bold;color:#fff"><span style="letter-spacing:-0.791px">Biological Sciences 2nd floor</span></div>
<div class="t" style="left:1059px;width:145px;top:792px;font-size:16.5px;text-align:center;color:#000;"><span style="letter-spacing:-0.827px">Wed</span></div>
<div class="t" style="left:1206px;width:130px;top:792px;font-size:16.5px;text-align:center;color:#000;"><span style="letter-spacing:-0.489px">Fri</span></div>
<div class="t" style="left:30px;top:814px;font-size:16.5px;font-weight:bold;color:#fff"><span style="letter-spacing:-0.776px">Biological Sciences 3rd floor</span></div>
<div class="t" style="left:1059px;width:145px;top:814px;font-size:16.5px;text-align:center;color:#000;"><span style="letter-spacing:-0.489px">Fri</span></div>
<div class="t" style="left:1206px;width:130px;top:814px;font-size:16.5px;text-align:center;color:#000;"><span style="letter-spacing:-0.827px">Wed</span></div>
<div class="a" style="left:25px;top:284px;width:402px;height:67px;border:2px solid #0b6a35"></div>
<div class="a" style="left:27px;top:286px;width:398px;height:63px;border:1px solid #fff"></div>
<div class="a" style="left:422px;top:346px;width:7px;height:7px;background:#0b6a35;border:1px solid #fff"></div>
<div class="a" style="left:1px;top:349px;width:1567px;height:1px;background:#9c9c9c"></div>
</div><!--/grid-->
<!--BOTTOM-->
<!-- ===== vertical scrollbar ===== -->
<div class="a" style="left:1568px;top:120px;width:22px;height:714px;background:#f0f0f0"></div>
<div class="a" style="left:1571px;top:120px;width:16px;height:713px;background:#f6f6f6;border-radius:8px"></div>
<svg class="a" style="left:1574px;top:124px" width="12" height="9" viewBox="0 0 12 9"><path d="M1 8 L6 1.5 L11 8 Z" fill="#767676"/></svg>
<div class="a" style="left:1575px;top:137px;width:9px;height:72px;background:#767676;border-radius:5px"></div>
<svg class="a" style="left:1574px;top:823px" width="12" height="9" viewBox="0 0 12 9"><path d="M1 1 L11 1 L6 7.5 Z" fill="#767676"/></svg>

<!-- ===== sheet tab bar ===== -->
<div class="a" style="left:1px;top:834px;width:1589px;height:32px;background:#f0f0f0"></div>
<svg class="a" style="left:28px;top:844px" width="10" height="12" viewBox="0 0 10 12" fill="none" stroke="#8a8a8a" stroke-width="1.1"><path d="M7.5 1 L2.5 6 L7.5 11"/></svg>
<svg class="a" style="left:60px;top:844px" width="10" height="12" viewBox="0 0 10 12" fill="none" stroke="#8a8a8a" stroke-width="1.1"><path d="M2.5 1 L7.5 6 L2.5 11"/></svg>
<div class="a" style="left:-5px;top:834px;width:122px;height:9px;border:1px solid #e4e4e4;border-bottom:none;border-radius:0 7px 0 0;-webkit-mask-image:linear-gradient(#000 40%,transparent)"></div>
<div class="a" style="left:286px;top:834px;width:1310px;height:9px;border:1px solid #e4e4e4;border-bottom:none;border-radius:7px 0 0 0;-webkit-mask-image:linear-gradient(#000 40%,transparent)"></div>
<div class="a" style="left:117px;top:834px;width:169px;height:29px;background:#fff;border:1px solid #e3e3e3;border-radius:6px"></div>
<div class="a" style="left:121px;top:837px;width:36px;height:18px;background:linear-gradient(135deg,#dcdcdc,#c8c8c8)"></div>
<div class="t" style="left:160px;top:840px;font-size:14px;color:#242424">Cleaning Schedule</div>
<div class="a" style="left:125px;top:857px;width:153px;height:2px;background:#107c41"></div>
<div class="a" style="left:289px;top:841px;width:1px;height:17px;background:#d6d6d6"></div>
<svg class="a" style="left:331px;top:843px" width="13" height="13" viewBox="0 0 13 13" stroke="#424242" stroke-width="1.1"><path d="M6.5 0.5 V12.5 M0.5 6.5 H12.5"/></svg>
<div class="a" style="left:956px;top:846px;width:2px;height:2px;background:#242424"></div>
<div class="a" style="left:956px;top:850px;width:2px;height:2px;background:#242424"></div>
<div class="a" style="left:956px;top:854px;width:2px;height:2px;background:#242424"></div>
<div class="a" style="left:973px;top:841px;width:595px;height:16px;background:#f7f7f7;border-radius:8px"></div>
<svg class="a" style="left:977px;top:844px" width="9" height="11" viewBox="0 0 9 11"><path d="M8 1 L8 10 L1.5 5.5 Z" fill="#717171"/></svg>
<div class="a" style="left:990px;top:845px;width:520px;height:9px;background:#717171;border-radius:5px"></div>
<svg class="a" style="left:1555px;top:844px" width="9" height="11" viewBox="0 0 9 11"><path d="M1 1 L1 10 L7.5 5.5 Z" fill="#717171"/></svg>

<!-- ===== status bar ===== -->
<div class="a" style="left:1px;top:866px;width:1589px;height:1px;background:#fafafa"></div>
<div class="a" style="left:1px;top:867px;width:1589px;height:21px;background:#f3f3f3"></div>
<div class="t" style="left:12px;top:873px;font-size:10.9px;color:#242424">Ready</div>
<svg class="a" style="left:58px;top:866px" width="24" height="23" viewBox="0 0 24 23" fill="none" stroke="#242424" stroke-width="1.1" stroke-linecap="round">
  <circle cx="11" cy="6.2" r="1.6"/>
  <path d="M13.5 9.6 C15 9.2 16.6 8.6 16.6 7.5 C16.6 6.5 15.6 6 14.6 6.6 C13.5 7.3 12.3 8.3 11 8.3 C9.7 8.3 8.5 7.3 7.4 6.6 C6.4 6 5.4 6.4 5.3 7.3 C5.2 8.5 6.8 9.3 8.4 9.8 C8.7 11.5 8.5 13 7.9 15 C7.5 16.5 7.8 17.7 8.6 17.7 C9.5 17.7 9.9 16.3 10.3 14.6"/>
  <circle cx="11" cy="13.8" r="0.6" fill="#242424"/>
  <path d="M12.5 11.3 L19 17.8 M19 11.3 L12.5 17.8"/>
</svg>
<div class="t" style="left:81px;top:872px;font-size:11.2px;color:#424242">Accessibility: Investigate</div>
<div class="a" style="left:1279px;top:867px;width:40px;height:21px;background:#e0e0e0"></div>
<svg class="a" style="left:1291px;top:869px" width="15" height="15" viewBox="0 0 15 15" fill="none" stroke="#242424" stroke-width="1.2"><rect x="1.5" y="1.5" width="12" height="12"/><path d="M5.5 1.5 V13.5 M9.5 1.5 V13.5 M1.5 5.5 H13.5 M1.5 9.5 H13.5"/></svg>
<svg class="a" style="left:1285px;top:866px" width="110" height="23" viewBox="0 0 110 23" fill="none" stroke="#242424" stroke-width="1.2">
  <rect x="47.6" y="4.6" width="13" height="11.8"/>
  <rect x="50.6" y="6.6" width="7" height="7.8"/>
  <path d="M52.3 8.5 H56 M52.3 10.5 H56 M52.3 12.5 H56"/>
  <rect x="87.6" y="4.6" width="13" height="11.8"/>
  <path d="M87.6 10.8 H95.5 V4.6 M91.5 4.6 V10.8"/>
</svg>
<div class="a" style="left:1405px;top:876px;width:8px;height:1px;background:#424242"></div>
<div class="a" style="left:1418px;top:877px;width:100px;height:1px;background:#8a8a8a"></div>
<div class="a" style="left:1466px;top:872px;width:5px;height:11px;background:#6e6e6e"></div>
<svg class="a" style="left:1522px;top:872px" width="9" height="9" viewBox="0 0 9 9" stroke="#424242" stroke-width="1"><path d="M4.5 0 V9 M0 4.5 H9"/></svg>
<div class="t" style="left:1544px;top:872px;font-size:10.8px;color:#424242">100%</div>
<!--/BOTTOM-->
</body></html>
